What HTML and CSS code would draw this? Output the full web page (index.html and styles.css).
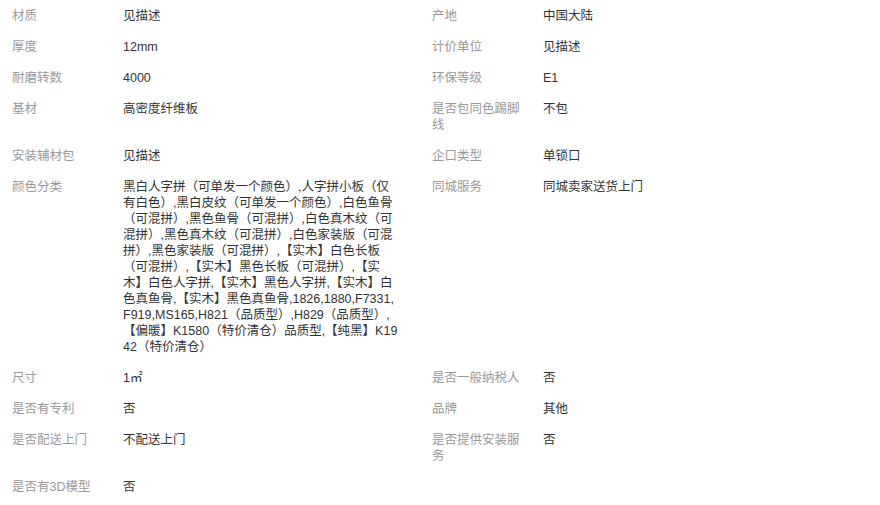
FILE: index.html
```html
<!DOCTYPE html>
<html lang="zh-CN">
<head>
<meta charset="UTF-8" />
<meta name="viewport" content="width=device-width, initial-scale=1.0">
<title>商品参数</title>
<link rel="stylesheet" href="styles.css">
</head>
<body>

<div class="attrs">
  <div class="attr-name">材质</div>
  <div class="attr-value">见描述</div>
  <div class="attr-name">产地</div>
  <div class="attr-value">中国大陆</div>

  <div class="attr-name">厚度</div>
  <div class="attr-value">12mm</div>
  <div class="attr-name">计价单位</div>
  <div class="attr-value">见描述</div>

  <div class="attr-name">耐磨转数</div>
  <div class="attr-value">4000</div>
  <div class="attr-name">环保等级</div>
  <div class="attr-value">E1</div>

  <div class="attr-name">基材</div>
  <div class="attr-value">高密度纤维板</div>
  <div class="attr-name">是否包同色踢脚线</div>
  <div class="attr-value">不包</div>

  <div class="attr-name">安装辅材包</div>
  <div class="attr-value">见描述</div>
  <div class="attr-name">企口类型</div>
  <div class="attr-value">单锁口</div>

  <div class="attr-name">颜色分类</div>
  <div class="attr-value">黑白人字拼（可单发一个颜色）,人字拼小板（仅有白色）,黑白皮纹（可单发一个颜色）,白色鱼骨（可混拼）,黑色鱼骨（可混拼）,白色真木纹（可混拼）,黑色真木纹（可混拼）,白色家装版（可混拼）,黑色家装版（可混拼）,【实木】白色长板（可混拼）,【实木】黑色长板（可混拼）,【实木】白色人字拼,【实木】黑色人字拼,【实木】白色真鱼骨,【实木】黑色真鱼骨,1826,1880,F7331,F919,MS165,H821（品质型）,H829（品质型）,【偏暖】K1580（特价清仓）品质型,【纯黑】K1942（特价清仓）</div>
  <div class="attr-name">同城服务</div>
  <div class="attr-value">同城卖家送货上门</div>

  <div class="attr-name">尺寸</div>
  <div class="attr-value">1㎡</div>
  <div class="attr-name">是否一般纳税人</div>
  <div class="attr-value">否</div>

  <div class="attr-name">是否有专利</div>
  <div class="attr-value">否</div>
  <div class="attr-name">品牌</div>
  <div class="attr-value">其他</div>

  <div class="attr-name">是否配送上门</div>
  <div class="attr-value">不配送上门</div>
  <div class="attr-name">是否提供安装服务</div>
  <div class="attr-value">否</div>

  <div class="attr-name">是否有3D模型</div>
  <div class="attr-value">否</div>
</div>

</body>
</html>
```

FILE: styles.css
```css
body {
  margin: 0;
  background: #fff;
  font-family: "Liberation Sans", "Noto Sans CJK SC", sans-serif;
  font-size: 12.5px;
  line-height: 16px;
  color: #333;
  text-spacing-trim: space-all;
}
.attrs {
  display: grid;
  grid-template-columns: 111px 309px 111px 1fr;
}
.attr-name,
.attr-value {
  padding: 8px 12px 7px;
}
.attr-name {
  padding-right: 6px;
  color: #999;
}
.attr-value {
  padding-right: 21px;
  word-break: break-all;
}
```
